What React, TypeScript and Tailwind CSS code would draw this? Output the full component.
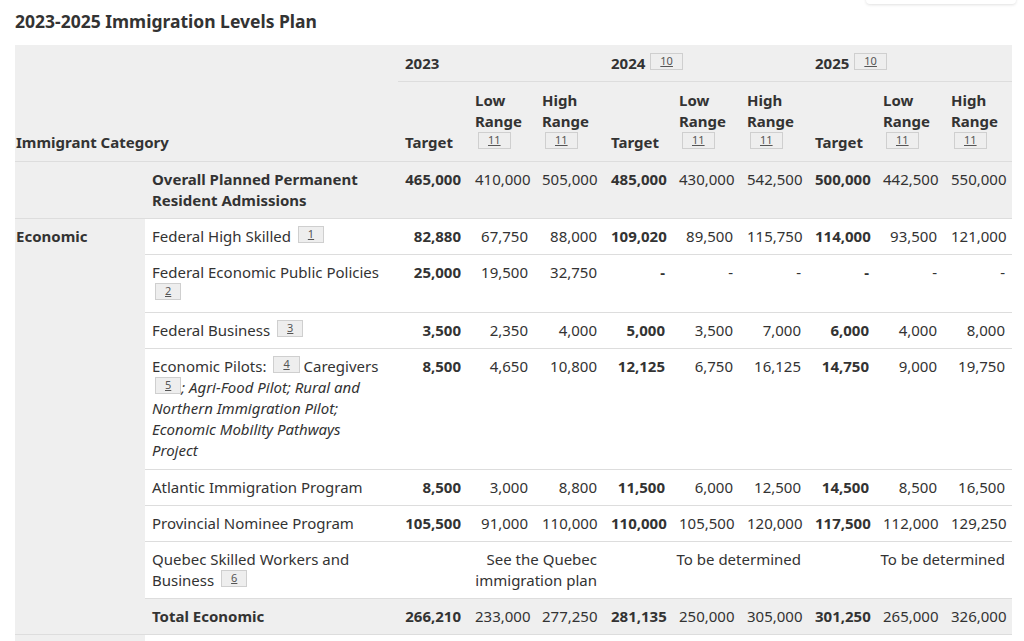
import type { ReactNode } from 'react';

type Row = {
  label: ReactNode;
  values?: string[];
  shaded?: boolean;
  bold?: boolean;
  custom?: ReactNode;
  tall?: boolean;
};

function Fn({ n, header }: { n: string; header?: boolean }) {
  return (
    <span
      className={
        'relative -top-[4px] inline-block border border-[#cfcfcf] bg-[#eeeeee] px-[9px] pt-px pb-[2px] text-[11px] leading-[12px] font-normal text-[#555] underline ' +
        (header ? 'ml-[5px]' : 'ml-[3px]')
      }
    >
      {n}
    </span>
  );
}

const rows: Row[] = [
  {
    label: 'Federal High Skilled',
    values: ['82,880', '67,750', '88,000', '109,020', '89,500', '115,750', '114,000', '93,500', '121,000'],
  },
  {
    label: 'Federal Economic Public Policies',
    values: ['25,000', '19,500', '32,750', '-', '-', '-', '-', '-', '-'],
    tall: true,
  },
  {
    label: 'Federal Business',
    values: ['3,500', '2,350', '4,000', '5,000', '3,500', '7,000', '6,000', '4,000', '8,000'],
  },
  {
    label: 'Economic Pilots',
    values: ['8,500', '4,650', '10,800', '12,125', '6,750', '16,125', '14,750', '9,000', '19,750'],
    tall: true,
  },
  {
    label: 'Atlantic Immigration Program',
    values: ['8,500', '3,000', '8,800', '11,500', '6,000', '12,500', '14,500', '8,500', '16,500'],
  },
  {
    label: 'Provincial Nominee Program',
    values: ['105,500', '91,000', '110,000', '110,000', '105,500', '120,000', '117,500', '112,000', '129,250'],
  },
  { label: 'Quebec', custom: true },
  {
    label: 'Total Economic',
    values: ['266,210', '233,000', '277,250', '281,135', '250,000', '305,000', '301,250', '265,000', '326,000'],
    shaded: true,
    bold: true,
  },
];

const footnotes: Record<string, string> = {
  'Federal High Skilled': '1',
  'Federal Economic Public Policies': '2',
  'Federal Business': '3',
};

const cell = 'border-b border-[#dddddd] px-[7px] pt-[7px] align-top';

function Values({ values, tall }: { values: string[]; tall?: boolean }) {
  return (
    <>
      {values.map((v, i) => (
        <td
          key={i}
          className={cell + (tall ? ' pb-[8px]' : ' pb-[7px]') + ' text-right ' + (i % 3 === 0 ? 'font-bold' : '')}
        >
          {v}
        </td>
      ))}
    </>
  );
}

export default function App() {
  return (
    <div className="relative min-h-[641px] overflow-hidden bg-white px-[15px] pt-[10px] font-['Noto_Sans',sans-serif] text-[15px] leading-[21px] text-[#333333]">
      <div className="absolute -top-[30px] right-[8px] h-[34px] w-[150px] rounded-sm bg-white shadow-[0_1px_3px_rgba(0,0,0,0.12)]" />
      <h2 className="mb-[13px] text-[17.5px] leading-[22px] font-bold">2023-2025 Immigration Levels Plan</h2>

      <table className="w-[997px] table-fixed border-collapse">
        <colgroup>
          <col className="w-[130px]" />
          <col className="w-[253px]" />
          <col className="w-[70px]" />
          <col className="w-[67px]" />
          <col className="w-[69px]" />
          <col className="w-[68px]" />
          <col className="w-[68px]" />
          <col className="w-[68px]" />
          <col className="w-[68px]" />
          <col className="w-[68px]" />
          <col className="w-[68px]" />
        </colgroup>
        <thead className="bg-[#efefef]">
          <tr>
            <th
              colSpan={2}
              rowSpan={2}
              className="border-b border-[#dddddd] py-2 pl-px text-left align-bottom font-bold"
            >
              Immigrant Category
            </th>
            <th colSpan={3} className="border-b border-[#dddddd] px-[7px] pt-[8px] pb-[7px] text-left font-bold">
              2023
            </th>
            <th colSpan={3} className="border-b border-[#dddddd] px-[7px] pt-[8px] pb-[7px] text-left font-bold">
              2024
              <Fn n="10" header />
            </th>
            <th colSpan={3} className="border-b border-[#dddddd] px-[7px] pt-[8px] pb-[7px] text-left font-bold">
              2025
              <Fn n="10" header />
            </th>
          </tr>
          <tr>
            {['2023', '2024', '2025'].map((y) => (
              <HeaderGroup key={y} />
            ))}
          </tr>
        </thead>
        <tbody>
          <tr className="bg-[#efefef]">
            <td className="border-b border-[#dddddd]" />
            <td className={cell + ' pb-[7px] font-bold'}>Overall Planned Permanent Resident Admissions</td>
            <Values values={['465,000', '410,000', '505,000', '485,000', '430,000', '542,500', '500,000', '442,500', '550,000']} />
          </tr>
          {rows.map((r, idx) => {
            const key = String(r.label);
            return (
              <tr key={key} className={r.shaded ? 'bg-[#efefef]' : ''}>
                {idx === 0 && (
                  <td rowSpan={rows.length} className="border-b border-[#dddddd] bg-[#efefef] py-[7px] pl-px align-top font-bold">
                    Economic
                  </td>
                )}
                <td className={cell + (r.tall ? ' pb-[8px]' : ' pb-[7px]') + (r.bold ? ' font-bold' : '')}>
                  {key === 'Economic Pilots' ? (
                    <>
                      Economic Pilots: <Fn n="4" /> Caregivers
                      <br />
                      <Fn n="5" />
                      <em>
                        ; Agri-Food Pilot; Rural and
                        <br />
                        Northern Immigration Pilot;
                        <br />
                        Economic Mobility Pathways
                        <br />
                        Project
                      </em>
                    </>
                  ) : key === 'Quebec' ? (
                    <>
                      Quebec Skilled Workers and
                      <br />
                      Business <Fn n="6" />
                    </>
                  ) : (
                    <>
                      {r.label}
                      {footnotes[key] && (
                        <>
                          {' '}
                          <Fn n={footnotes[key]} />
                        </>
                      )}
                    </>
                  )}
                </td>
                {r.custom ? (
                  <>
                    <td colSpan={3} className={cell + ' pb-[7px] text-right'}>
                      See the Quebec
                      <br />
                      immigration plan
                    </td>
                    <td colSpan={3} className={cell + ' pb-[7px] text-right whitespace-nowrap'}>
                      To be determined
                    </td>
                    <td colSpan={3} className={cell + ' pb-[7px] text-right whitespace-nowrap'}>
                      To be determined
                    </td>
                  </>
                ) : (
                  <Values values={r.values ?? []} tall={r.tall} />
                )}
              </tr>
            );
          })}
          <tr className="h-[36px]">
            <td className="border-b border-[#dddddd] bg-[#efefef]" />
            <td colSpan={10} className="border-b border-[#dddddd]" />
          </tr>
        </tbody>
      </table>
    </div>
  );
}

function HeaderGroup() {
  return (
    <>
      <th className="border-b border-[#dddddd] px-[7px] py-2 text-left align-bottom font-bold">Target</th>
      <th className="border-b border-[#dddddd] px-[7px] py-2 text-left align-bottom font-bold">
        Low Range
        <br />
        <Fn n="11" />
      </th>
      <th className="border-b border-[#dddddd] px-[7px] py-2 text-left align-bottom font-bold">
        High Range
        <br />
        <Fn n="11" />
      </th>
    </>
  );
}
